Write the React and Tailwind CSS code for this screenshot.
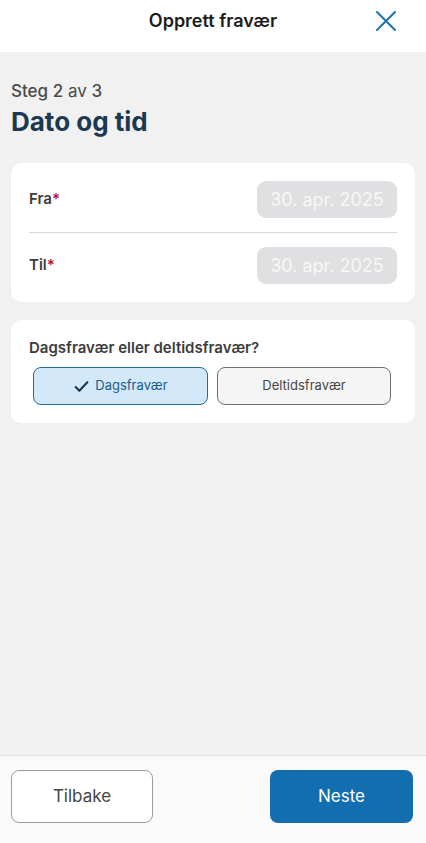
import React, { useState } from "react";

export default function App() {
  const [type, setType] = useState("dag");

  return (
    <div
      className="h-[843px] w-full flex flex-col bg-[#f1f1f1] text-[#3c3c3c]"
      style={{ fontFamily: "Inter, 'Noto Sans', sans-serif" }}
    >
      <header className="h-[52px] shrink-0 bg-white relative flex justify-center pt-[9px]">
        <h1 className="text-[18px] leading-[24px] font-semibold text-[#1c1c1c]">Opprett fravær</h1>
        <button className="absolute right-[28px] top-[9px] text-[#1a73b4]" aria-label="Lukk">
          <svg width="24" height="24" viewBox="0 0 24 24" fill="none" stroke="currentColor" strokeWidth="2" strokeLinecap="round">
            <path d="M3 3l18 18M21 3L3 21" />
          </svg>
        </button>
      </header>

      <main className="flex-1 px-[11px] pt-[26px]">
        <p className="text-[17px] text-[#4a4a4a] leading-[26px]">
          <span className="font-medium">Steg 2</span> av <span className="font-medium">3</span>
        </p>
        <h2 className="text-[26px] font-bold text-[#1b3a52] leading-[34px] mt-[1px]">Dato og tid</h2>

        <section className="mt-[24px] bg-white rounded-[10px] px-[18px] pt-[18px] pb-[18px]">
          <div className="flex items-center justify-between h-[37px]">
            <span className="text-[15px] font-semibold text-[#3c3c3c]">
              Fra<span className="text-[#b3123a]">*</span>
            </span>
            <div className="w-[140px] h-[37px] rounded-[9px] bg-[#e0e0e2] flex items-center justify-center text-[18px] text-[#f7f7f7]">
              30. apr. 2025
            </div>
          </div>
          <div className="h-px bg-[#d8d8d8] my-[14px]" />
          <div className="flex items-center justify-between h-[37px]">
            <span className="text-[15px] font-semibold text-[#3c3c3c]">
              Til<span className="text-[#b3123a]">*</span>
            </span>
            <div className="w-[140px] h-[37px] rounded-[9px] bg-[#e0e0e2] flex items-center justify-center text-[18px] text-[#f7f7f7]">
              30. apr. 2025
            </div>
          </div>
        </section>

        <section className="mt-[18px] bg-white rounded-[10px] px-[18px] pt-[18px] pb-[18px]">
          <p className="text-[15px] font-semibold text-[#3c3c3c] leading-[20px]">Dagsfravær eller deltidsfravær?</p>
          <div className="mt-[9px] flex gap-[9px] px-[4px]">
            <button
              onClick={() => setType("dag")}
              className={
                type === "dag"
                  ? "w-[175px] h-[38px] rounded-[8px] border border-[#1f6aa0] bg-[#d3e8f8] text-[#1b5c8c] text-[13px] flex items-center justify-center gap-[5px]"
                  : "w-[175px] h-[38px] rounded-[8px] border border-[#6f6f6f] bg-[#f5f5f5] text-[#454545] text-[13px] flex items-center justify-center"
              }
            >
              {type === "dag" && (
                <svg width="17" height="17" viewBox="0 0 16 16" fill="none" stroke="#1b3a52" strokeWidth="2" strokeLinecap="round" strokeLinejoin="round">
                  <path d="M2.5 8.5l3.5 3.5 7.5-8" />
                </svg>
              )}
              Dagsfravær
            </button>
            <button
              onClick={() => setType("deltid")}
              className={
                type === "deltid"
                  ? "w-[174px] h-[38px] rounded-[8px] border border-[#1f6aa0] bg-[#d3e8f8] text-[#1b5c8c] text-[13px] flex items-center justify-center gap-[5px]"
                  : "w-[174px] h-[38px] rounded-[8px] border border-[#6f6f6f] bg-[#f5f5f5] text-[#454545] text-[13px] flex items-center justify-center"
              }
            >
              {type === "deltid" && (
                <svg width="17" height="17" viewBox="0 0 16 16" fill="none" stroke="#1b3a52" strokeWidth="2" strokeLinecap="round" strokeLinejoin="round">
                  <path d="M2.5 8.5l3.5 3.5 7.5-8" />
                </svg>
              )}
              Deltidsfravær
            </button>
          </div>
        </section>
      </main>

      <footer className="h-[88px] shrink-0 bg-[#fafafa] border-t border-[#e2e2e2] flex justify-between pl-[11px] pr-[13px] pt-[14px]">
        <button className="w-[142px] h-[53px] rounded-[8px] border border-[#9c9c9c] bg-white text-[17px] text-[#454545]">
          Tilbake
        </button>
        <button className="w-[143px] h-[53px] rounded-[8px] bg-[#136eb0] text-[17px] text-white">
          Neste
        </button>
      </footer>
    </div>
  );
}
